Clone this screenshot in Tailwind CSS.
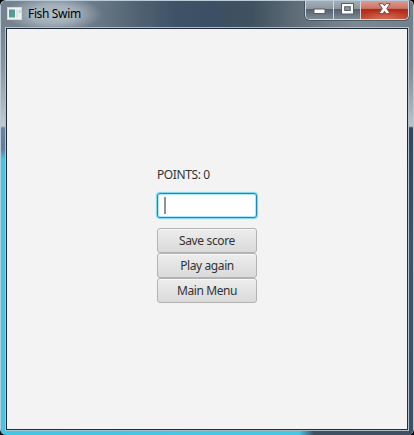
<!DOCTYPE html>
<html lang="en">
<head>
<meta charset="utf-8">
<title>Fish Swim</title>
<script src="https://cdn.jsdelivr.net/npm/@tailwindcss/browser@4"></script>
</head>
<body class="bg-black font-['Noto_Sans',sans-serif] overflow-hidden">
<div class="w-[414px] h-[435px] flex flex-col overflow-hidden rounded-[6px] border-x border-t border-[#b9cbd8] bg-[#3e5062]">
  <header class="relative h-[26px] shrink-0 flex justify-between bg-[radial-gradient(ellipse_48px_19px_at_53px_13px,#b3bec7_0%,#a9b5bfdd_50%,#a2afba00_100%),linear-gradient(90deg,#75838e_0%,#71808c_15%,#687785_24%,#4f6070_34%,#3f5368_42%,#3b5064_51%,#40525f_61%,#606e78_72%,#7d8992_86%,#71808a_100%)]">
    <div class="flex items-center pl-[6px] gap-[6px] h-[26px]">
      <svg class="w-[15px] h-[13px] shrink-0 -mt-px" viewBox="0 0 15 13">
        <defs><linearGradient id="g" x1="0" y1="0" x2="1" y2="1"><stop stop-color="#4f8fb0"/><stop offset="1" stop-color="#58a77f"/></linearGradient></defs>
        <rect x=".5" y=".5" width="14" height="12" fill="#f0f2f3" stroke="#d3d8db"/>
        <rect x="2" y="2.5" width="6" height="8" fill="url(#g)"/>
        <rect x="9" y="2.5" width="2.5" height="8" fill="#dfe3e5"/>
        <rect x="12" y="3" width="1.5" height="3" fill="#b5d8c8"/>
      </svg>
      <h1 class="text-[12px] leading-[16px] tracking-[-0.35px] text-black">Fish Swim</h1>
    </div>
    <div class="mr-[4px] -mt-px h-[20px] w-[104px] flex shrink-0 overflow-hidden rounded-b-[5px] border border-t-0 border-[#d1d8dd] shadow-[0_0_0_1px_#3b4854aa]">
      <div class="w-[28px] pt-[3px] flex items-start justify-center border-r border-[#d1d8dd] bg-[linear-gradient(180deg,#a9b2ba_0%,#8c97a1_45%,#56636f_50%,#7d8a96_100%)]">
        <svg class="w-[13px] h-[13px] shrink-0 mr-px" viewBox="0 0 13 13"><rect x="1" y="6" width="11" height="4.5" fill="#fff" stroke="#555f6b"/></svg>
      </div>
      <div class="w-[27px] pt-[3px] flex items-start justify-center border-r border-[#d1d8dd] bg-[linear-gradient(180deg,#a9b2ba_0%,#8c97a1_45%,#56636f_50%,#7d8a96_100%)]">
        <svg class="w-[13px] h-[12px] shrink-0" viewBox="0 0 13 12"><rect x=".5" y=".5" width="12" height="10.5" fill="#fff" stroke="#555f6b"/><rect x="3.7" y="3.7" width="5.6" height="3.8" fill="#8a949e" stroke="#555f6b"/></svg>
      </div>
      <div class="w-[47px] pt-[3px] flex items-start justify-center bg-[radial-gradient(ellipse_25px_9px_at_50%_100%,#df8069aa,transparent),linear-gradient(180deg,#dba095_0%,#cf7566_44%,#b22b18_50%,#c04a31_100%)]">
        <svg class="w-[13px] h-[12px] shrink-0" viewBox="0 0 13 12"><path d="M.9.7H4.9L6.5 2.7L8.1.7H12.1L8.7 5.5L12.1 10.6H8.1L6.5 8.4L4.9 10.6H.9L4.3 5.5Z" fill="#fff" stroke="#5f4a50" stroke-width=".9"/></svg>
      </div>
    </div>
  </header>
  <div class="flex h-[404px] shrink-0">
    <div class="w-[4px] bg-[linear-gradient(180deg,#75838e_0px,#8a959d_40px,#c4cacf_99px,#6883a4_101px,#667e9d_122px,#43c5e3_132px)]"></div>
    <div class="w-[404px] border border-[#a0b4c0] bg-[linear-gradient(180deg,#1d2a3a_0px,#1d2a3a_120px,#1b3040_140px)] p-px rounded-[1px] [border-image:linear-gradient(90deg,#9fcddb_0%,#a3b9c6_60%,#b3c2cc_100%)_1]">
      <main class="h-[400px] bg-[#f3f3f3] flex flex-col items-center pt-[137px]">
        <form class="w-[100px] flex flex-col text-[12px] text-[#333333]">
          <p class="h-[18px] leading-[18px] tracking-[-0.4px]">POINTS: 0</p>
          <div class="mt-[9px] h-[25px] rounded-[3px] border border-[#168cb2] bg-white shadow-[0_0_1px_1px_#75d5f0,inset_0_0_0_1px_#b4e7f5] flex items-center pl-[6px]">
            <span class="w-[2px] h-[17px] bg-[#929292]"></span>
          </div>
          <button type="button" class="mt-[10px] h-[25px] leading-[23px] tracking-[-0.35px] rounded-[3px] border border-[#b3b3b3] bg-[linear-gradient(180deg,#ededed,#dadada)] shadow-[inset_0_1px_0_#f8f8f8]">Save score</button>
          <button type="button" class="h-[25px] leading-[23px] tracking-[-0.4px] rounded-[3px] border border-[#b3b3b3] bg-[linear-gradient(180deg,#ededed,#dadada)] shadow-[inset_0_1px_0_#f8f8f8]">Play again</button>
          <button type="button" class="h-[25px] leading-[23px] tracking-[-0.4px] rounded-[3px] border border-[#b3b3b3] bg-[linear-gradient(180deg,#ededed,#dadada)] shadow-[inset_0_1px_0_#f8f8f8]">Main Menu</button>
        </form>
      </main>
    </div>
    <div class="w-[4px] bg-[linear-gradient(180deg,#71808a_0px,#7d8992_40px,#bcc3c8_99px,#344658_101px,#3f5364_220px,#3e5062_100%)]"></div>
  </div>
  <div class="h-[4px] shrink-0 bg-[linear-gradient(90deg,#43c5e3_0px,#43c9e7_298px,#3e5062_313px)]"></div>
</div>
</body>
</html>
